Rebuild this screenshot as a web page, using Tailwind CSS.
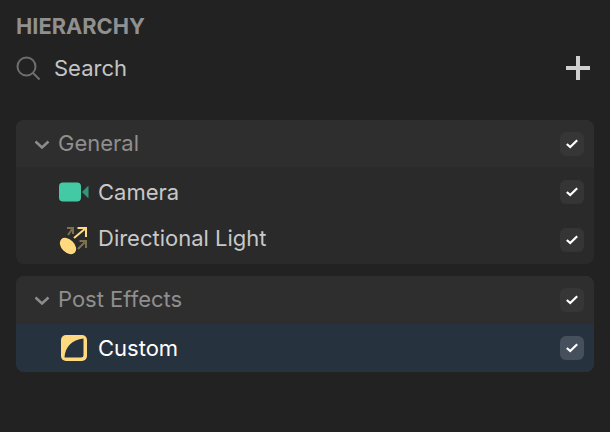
<!DOCTYPE html>
<html lang="en">

<head>
  <title>Hierarchy</title>
  <meta charset="UTF-8">
  <script src="https://cdn.jsdelivr.net/npm/@tailwindcss/browser@4"></script>
</head>

<body class="w-[610px] h-[432px] overflow-hidden bg-[#222222] font-['Inter',sans-serif]">
  <div class="px-4">
    <!-- header -->
    <h1 class="pt-[14px] h-[48px] text-[21.8px] leading-[24px] font-bold text-[#909090]">HIERARCHY</h1>
    <div class="flex items-center h-[40px] pr-1">
      <svg class="w-6 h-6 mr-[14px]" viewBox="0 0 24 24" fill="none" stroke="#6e6e6e" stroke-width="2">
        <circle cx="10.5" cy="10.5" r="9" />
        <path d="M17 17l6.500 6.500" />
      </svg>
      <span class="flex-1 text-[22px] leading-[28px] text-[#c4c4c4]">Search</span>
      <svg class="w-6 h-6" viewBox="0 0 24 24" fill="#d0d0d0">
        <path d="M10 0h4v10h10v4H14v10h-4V14H0v-4h10z" />
      </svg>
    </div>

    <!-- General -->
    <div class="mt-[32px] rounded-lg bg-[#2a2a2a] overflow-hidden">
      <div class="flex items-center h-[48px] pl-[18px] pr-[10px] bg-[#2e2e2e] border-b border-[#2a2a2a]">
        <svg class="w-[16px] h-[16px] mr-[8px] mt-[2px]" viewBox="0 0 16 16" fill="none" stroke="#8c8c8c" stroke-width="2.500">
          <path d="M1.500 4.500L8 10.500l6.500-6" />
        </svg>
        <span class="flex-1 text-[22px] text-[#8f8f8f]">General</span>
        <span class="flex items-center justify-center w-6 h-6 rounded-md bg-[#363636]">
          <svg class="w-[12px] h-[10px]" viewBox="0 0 12 10" fill="none" stroke="#ffffff" stroke-width="2.200"><path d="M.8 5l3.400 3L11.200 1.200" /></svg>
        </span>
      </div>
      <div class="flex items-center h-[48px] pl-[43px] pr-[10px]">
        <svg class="w-[30px] h-[20px] mr-[9px]" viewBox="0 0 30 20">
          <rect x="0" y="0.500" width="22" height="19" rx="4" fill="#43c9a4" />
          <path d="M23.500 10l5.500-5.500v11z" fill="#36947c" stroke="#36947c" stroke-width="1" stroke-linejoin="round" />
        </svg>
        <span class="flex-1 text-[22px] text-[#c8c8c8]">Camera</span>
        <span class="flex items-center justify-center w-6 h-6 rounded-md bg-[#353535]">
          <svg class="w-[12px] h-[10px]" viewBox="0 0 12 10" fill="none" stroke="#ffffff" stroke-width="2.200"><path d="M.8 5l3.400 3L11.200 1.200" /></svg>
        </span>
      </div>
      <div class="flex items-center h-[48px] pl-[43px] pr-[10px]">
        <svg class="w-[30px] h-[28px] mr-[9px] mt-[2px]" viewBox="0 0 30 28" fill="none">
          <path d="M9 8l5-7M8 1h6v6" stroke="#7d7050" stroke-width="2" />
          <path d="M15 11L27 1M18.500 1H27v9" stroke="#ffd97d" stroke-width="2" />
          <path d="M19 22l8-8M20.500 14H27v7" stroke="#7d7050" stroke-width="2" />
          <ellipse cx="9" cy="19" rx="9.500" ry="6.500" transform="rotate(45 9 19)" fill="#ffd97d" />
        </svg>
        <span class="flex-1 mb-[4px] text-[22px] text-[#c8c8c8]">Directional Light</span>
        <span class="flex items-center justify-center w-6 h-6 rounded-md bg-[#353535]">
          <svg class="w-[12px] h-[10px]" viewBox="0 0 12 10" fill="none" stroke="#ffffff" stroke-width="2.200"><path d="M.8 5l3.400 3L11.200 1.200" /></svg>
        </span>
      </div>
    </div>

    <!-- Post Effects -->
    <div class="mt-3 rounded-lg bg-[#2a2a2a] overflow-hidden">
      <div class="flex items-center h-[48px] pl-[18px] pr-[10px] bg-[#2e2e2e]">
        <svg class="w-[16px] h-[16px] mr-[8px] mt-[2px]" viewBox="0 0 16 16" fill="none" stroke="#8c8c8c" stroke-width="2.500">
          <path d="M1.500 4.500L8 10.500l6.500-6" />
        </svg>
        <span class="flex-1 mb-[2px] text-[22px] text-[#8f8f8f]">Post Effects</span>
        <span class="flex items-center justify-center w-6 h-6 rounded-md bg-[#363636]">
          <svg class="w-[12px] h-[10px]" viewBox="0 0 12 10" fill="none" stroke="#ffffff" stroke-width="2.200"><path d="M.8 5l3.400 3L11.200 1.200" /></svg>
        </span>
      </div>
      <div class="flex items-center h-[48px] pl-[44px] pr-[10px] bg-[#27323f]">
        <svg class="w-[28px] h-[28px] mr-[10px]" viewBox="0 0 28 28">
          <rect x="1" y="1" width="26" height="26" rx="5" fill="#ffd97d" />
          <path d="M4.500 23.500C5 13 12 5.500 23.500 4.500V21a2.500 2.500 0 0 1-2.500 2.500z" fill="#27323f" />
        </svg>
        <span class="flex-1 text-[22px] text-white">Custom</span>
        <span class="flex items-center justify-center w-6 h-6 rounded-md bg-[#46505c]">
          <svg class="w-[12px] h-[10px]" viewBox="0 0 12 10" fill="none" stroke="#ffffff" stroke-width="2.200"><path d="M.8 5l3.400 3L11.200 1.200" /></svg>
        </span>
      </div>
    </div>
  </div>
</body>

</html>
